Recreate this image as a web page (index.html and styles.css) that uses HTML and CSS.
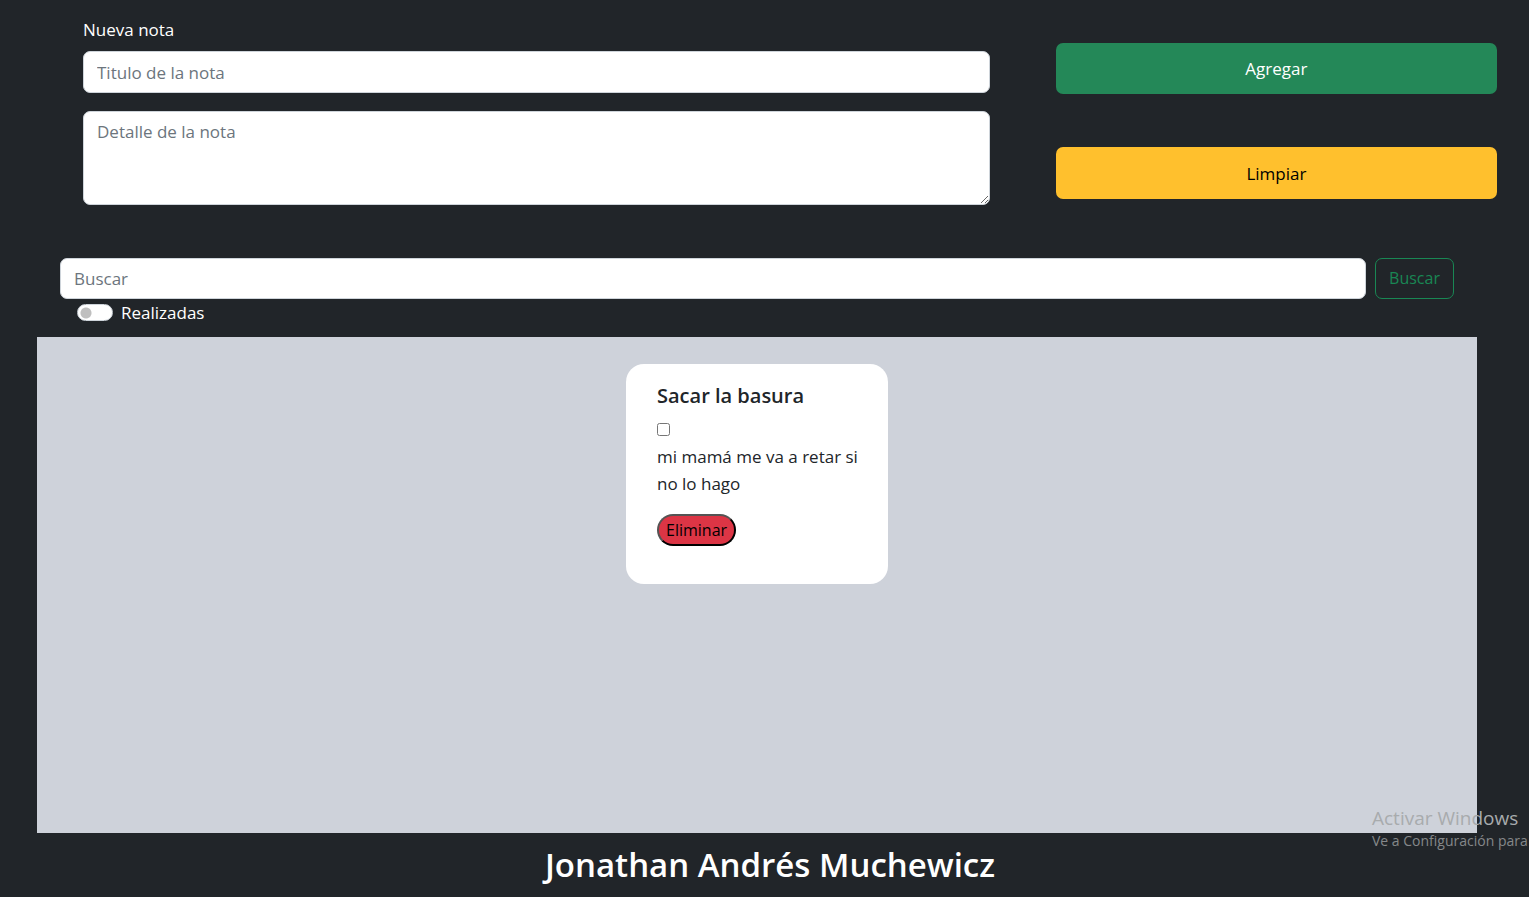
FILE: index.html
```
<!DOCTYPE html>
<html lang="es">
<head>
<meta charset="utf-8">
<meta name="viewport" content="width=device-width, initial-scale=1">
<title>Notas</title>
<link rel="stylesheet" href="styles.css">
</head>
<body class="page">
  <form class="note-form">
    <div class="note-fields">
      <label class="field-label" for="title">Nueva nota</label>
      <input class="control" id="title" type="text" placeholder="Titulo de la nota">
      <textarea class="control control-area" id="detail" aria-label="Detalle de la nota" placeholder="Detalle de la nota"></textarea>
    </div>
    <div class="note-actions">
      <button class="btn btn-add" type="button">Agregar</button>
      <button class="btn btn-clear" type="reset">Limpiar</button>
    </div>
  </form>
  <form class="search" role="search">
    <div class="search-row">
      <input class="control search-input" type="search" aria-label="Buscar" placeholder="Buscar">
      <button class="btn btn-search" type="button">Buscar</button>
    </div>
    <div class="switch">
      <input class="switch-input" id="done" type="checkbox" role="switch">
      <label for="done">Realizadas</label>
    </div>
  </form>
  <main class="board">
    <article class="note">
      <h2 class="note-title" id="note-title">Sacar la basura</h2>
      <input class="note-check" type="checkbox" aria-labelledby="note-title">
      <p class="note-text">mi mamá me va a retar si no lo hago</p>
      <button class="note-delete" type="button">Eliminar</button>
    </article>
  </main>
  <footer class="footer">
    <h1 class="author">Jonathan Andrés Muchewicz</h1>
  </footer>
  <aside class="watermark">
    <p class="watermark-title">Activar Windows</p>
    <p class="watermark-text">Ve a Configuración para</p>
  </aside>
</body>
</html>
```
FILE: styles.css
```
* {
  box-sizing: border-box;
}

.page {
  position: relative;
  display: flex;
  flex-direction: column;
  min-height: 100vh;
  margin: 0;
  overflow-x: hidden;
  background: #212529;
  color: #fff;
  font-family: "Open Sans", "Noto Sans", sans-serif;
  font-size: 17px;
  line-height: 27px;
}

.note-form {
  display: grid;
  grid-template-columns: 37fr 18fr;
  gap: 66px;
  padding: 16px 32px 0 83px;
}

.note-fields {
  display: flex;
  flex-direction: column;
}

.field-label {
  margin-bottom: 8px;
}

.control {
  width: 100%;
  height: 42px;
  margin: 0;
  padding: 6px 13px;
  border: 1px solid #ced4da;
  border-radius: 7px;
  background: #fff;
  color: #212529;
  font: inherit;
}

.control::placeholder {
  color: #6c757d;
  opacity: 1;
}

.control-area {
  height: 94px;
  margin-top: 18px;
  resize: vertical;
}

.note-actions {
  display: flex;
  flex-direction: column;
  gap: 53px;
  padding-top: 27px;
}

.btn {
  padding: 5px 12px;
  border: 1px solid transparent;
  border-radius: 7px;
  font: inherit;
}

.btn-add {
  height: 51px;
  background: #248858;
  color: #fff;
}

.btn-clear {
  height: 52px;
  background: #ffc02d;
  color: #000;
}

.search {
  padding: 53px 75px 0 60px;
}

.search-row {
  display: flex;
  gap: 9px;
}

.search-input {
  flex: 1;
  height: 41px;
  appearance: none;
}

.btn-search {
  width: 79px;
  border-color: #198754;
  background: transparent;
  color: #198754;
  font-size: 16px;
}

.switch {
  display: flex;
  align-items: center;
  gap: 8px;
  padding-left: 17px;
}

.switch-input {
  width: 36px;
  height: 17px;
  margin: 0;
  border: 1px solid #ced4da;
  border-radius: 9px;
  background: radial-gradient(circle at 8px 8px, #bfbfbf 5px, #fff 6px);
  appearance: none;
}

.board {
  display: flex;
  flex: 1;
  align-items: flex-start;
  justify-content: center;
  margin: 11px 52px 0 37px;
  padding: 27px;
  background: #ced2da;
}

.note {
  width: 262px;
  min-height: 220px;
  padding: 18px 30px 18px 31px;
  border-radius: 18px;
  background: #fff;
  color: #212529;
}

.note-title {
  margin: 0;
  font-size: 20px;
  font-weight: 600;
  line-height: 28px;
}

.note-check {
  display: block;
  width: 13px;
  height: 13px;
  margin: 13px 0 7px;
}

.note-text {
  margin: 0 0 17px;
}

.note-delete {
  height: 32px;
  padding: 0 7px;
  border: 2px outset #000;
  border-radius: 18px;
  background: #dc3545;
  color: #000;
  font: inherit;
  font-size: 16px;
  line-height: 28px;
}

.footer {
  padding: 10px 0 10px 11px;
  text-align: center;
}

.author {
  margin: 0;
  font-size: 33px;
  font-weight: 600;
  line-height: 44px;
}

.watermark {
  position: absolute;
  right: 0;
  bottom: 46px;
  width: 157px;
  color: #85888a;
  white-space: nowrap;
  pointer-events: none;
}

.watermark-title {
  margin: 0;
  font-size: 19px;
  line-height: 26px;
  color: #a8abad;
}

.watermark-text {
  margin: 0;
  font-size: 14px;
  line-height: 20px;
}
```
